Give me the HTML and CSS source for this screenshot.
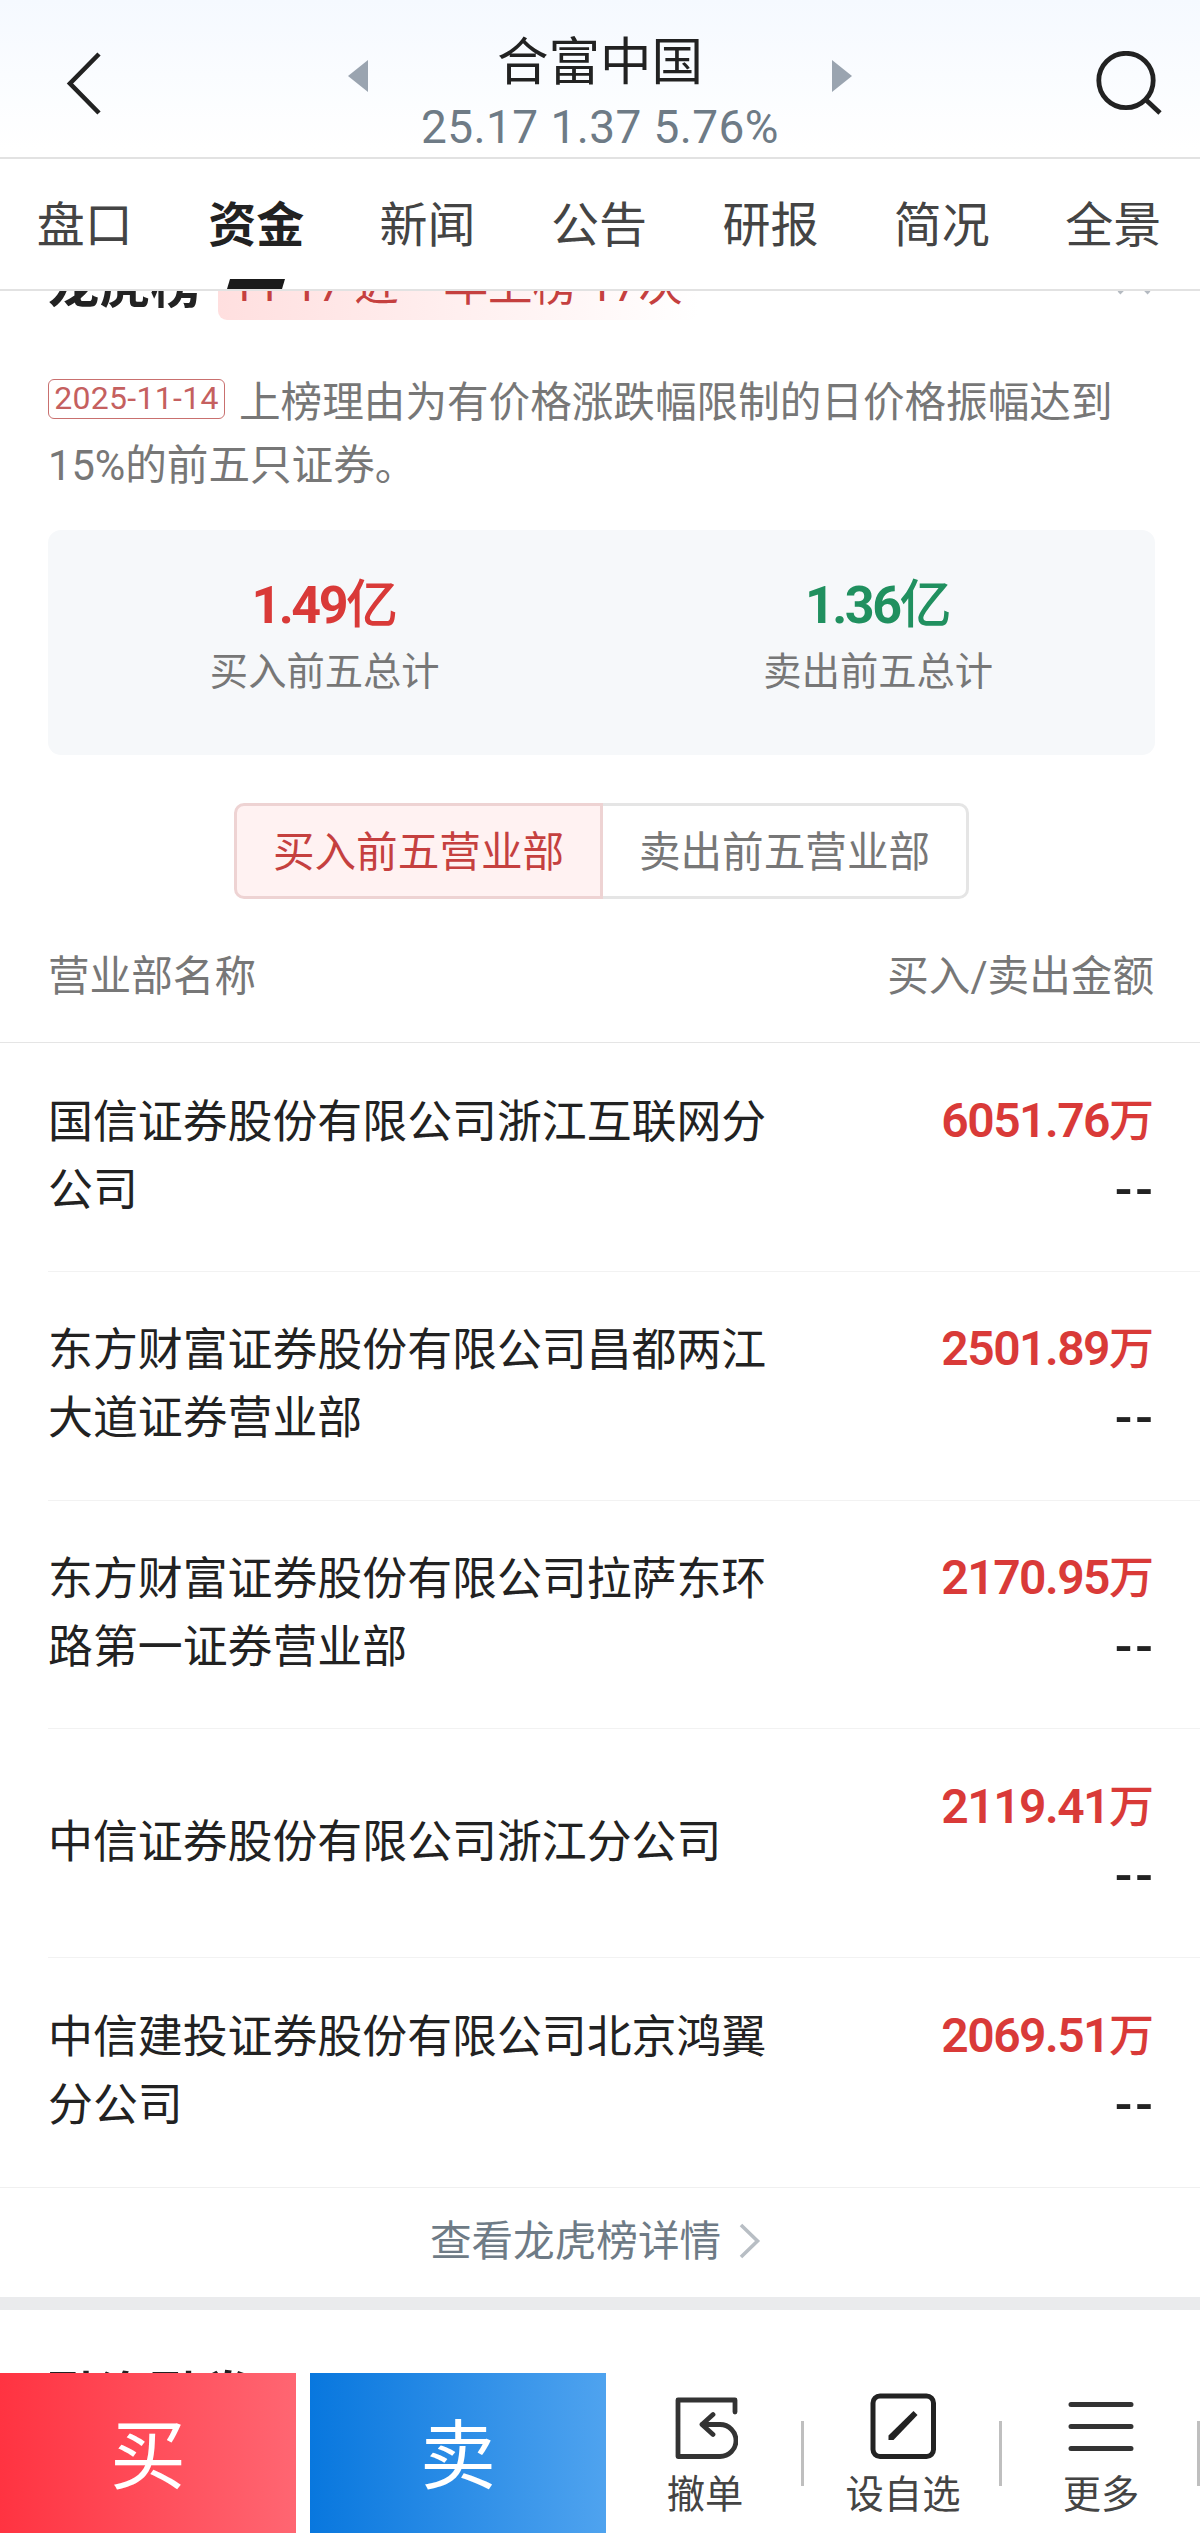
FILE: index.html
```html
<!DOCTYPE html>
<html lang="zh-CN">
<head>
<meta charset="utf-8">
<title>合富中国</title>
<link rel="stylesheet" href="styles.css">
</head>
<body>
<div class="app">
  <header class="topbar">
    <svg class="back" width="36" height="72" viewBox="0 0 36 72" fill="none" stroke="#222" stroke-width="4.6"><path d="M33 2 4 31.500 33 61"/></svg>
    <div class="stock">
      <svg class="arrow" width="20" height="32" viewBox="0 0 20 32"><path d="M20 0v32L0 16z" fill="#9aa4b0"/></svg>
      <div class="stock-text">
        <h1 class="stock-name">合富中国</h1>
        <p class="stock-quote">25.17 1.37 5.76%</p>
      </div>
      <svg class="arrow" width="20" height="32" viewBox="0 0 20 32"><path d="M0 0v32l20-16z" fill="#9aa4b0"/></svg>
    </div>
    <svg class="search" width="68" height="66" viewBox="0 0 68 66" fill="none" stroke="#222" stroke-width="4.800"><circle cx="30" cy="29.500" r="27.200"/><path d="M49 48 64 62"/></svg>
  </header>

  <nav class="tabs">
    <a class="tab">盘口</a>
    <a class="tab tab-active">资金<svg class="tab-mark" width="58" height="10" viewBox="0 0 58 10"><path d="M3 0h55l-3 10H0z" fill="#1a1a1a"/></svg></a>
    <a class="tab">新闻</a>
    <a class="tab">公告</a>
    <a class="tab">研报</a>
    <a class="tab">简况</a>
    <a class="tab">全景</a>
  </nav>

  <main class="content">
    <section class="board">
      <div class="board-head">
        <h2 class="section-title">龙虎榜</h2>
        <span class="board-badge">11-17 近一年上榜 17次</span>
        <svg class="collapse" width="34" height="20" viewBox="0 0 34 20" fill="none" stroke="#b4bac1" stroke-width="4"><path d="M2 18 17 3l15 15"/></svg>
      </div>
      <p class="reason"><span class="date-tag">2025-11-14</span>上榜理由为有价格涨跌幅限制的日价格振幅达到15%的前五只证券。</p>

      <div class="totals">
        <div class="total">
          <strong class="total-value up">1.49<span class="unit">亿</span></strong>
          <span class="total-label">买入前五总计</span>
        </div>
        <div class="total">
          <strong class="total-value down">1.36<span class="unit">亿</span></strong>
          <span class="total-label">卖出前五总计</span>
        </div>
      </div>

      <div class="segment">
        <span class="segment-item segment-on">买入前五营业部</span>
        <span class="segment-item">卖出前五营业部</span>
      </div>

      <div class="list-head"><span>营业部名称</span><span>买入/卖出金额</span></div>
      <ul class="list">
        <li class="row"><span class="name">国信证券股份有限公司浙江互联网分公司</span><span class="amounts"><b class="amount">6051.76<span class="unit">万</span></b><b class="none">--</b></span></li>
        <li class="row"><span class="name">东方财富证券股份有限公司昌都两江大道证券营业部</span><span class="amounts"><b class="amount">2501.89<span class="unit">万</span></b><b class="none">--</b></span></li>
        <li class="row"><span class="name">东方财富证券股份有限公司拉萨东环路第一证券营业部</span><span class="amounts"><b class="amount">2170.95<span class="unit">万</span></b><b class="none">--</b></span></li>
        <li class="row"><span class="name">中信证券股份有限公司浙江分公司</span><span class="amounts"><b class="amount">2119.41<span class="unit">万</span></b><b class="none">--</b></span></li>
        <li class="row"><span class="name">中信建投证券股份有限公司北京鸿翼分公司</span><span class="amounts"><b class="amount">2069.51<span class="unit">万</span></b><b class="none">--</b></span></li>
      </ul>
      <a class="detail">查看龙虎榜详情<svg class="detail-arrow" width="22" height="36" viewBox="0 0 22 36" fill="none" stroke="#b8bec4" stroke-width="3.600"><path d="M2 2l16.500 16L2 34"/></svg></a>
    </section>
    <section class="next">
      <h2 class="section-title">融资融券</h2>
    </section>
  </main>

  <footer class="toolbar">
    <a class="trade trade-buy">买</a>
    <a class="trade trade-sell">卖</a>
    <a class="tool">
      <svg width="66" height="66" viewBox="0 0 66 66" fill="none" stroke="#333" stroke-width="4.800" stroke-linecap="round" stroke-linejoin="round"><path d="M63 19V7H6V63.500H48A16 16 0 0 0 48 31.500H30M41 21.500 30 31.500l11 10"/></svg>
      <span>撤单</span>
    </a>
    <a class="tool">
      <svg width="66" height="66" viewBox="0 0 66 66" fill="none" stroke="#222" stroke-width="5"><rect x="3" y="3" width="60.500" height="60.500" rx="7"/><path d="M43.500 18 47.500 22 23.500 47H18.500V42.500z" fill="#222" stroke="none"/></svg>
      <span>设自选</span>
    </a>
    <a class="tool">
      <svg width="66" height="66" viewBox="0 0 66 66" fill="none" stroke="#333" stroke-width="5" stroke-linecap="round"><path d="M3 11.500h60M3 33.500h60M3 55.500h60"/></svg>
      <span>更多</span>
    </a>
  </footer>
</div>
</body>
</html>
```
FILE: styles.css
```css
* { box-sizing: border-box; }
body {
  margin: 0;
  background: #fff;
  color: #222;
  font-family: Roboto, "Noto Sans CJK SC", sans-serif;
}
h1, h2, p, ul { margin: 0; padding: 0; }
svg { display: block; flex: none; }
.app {
  display: flex;
  flex-direction: column;
  width: 1200px;
  height: 2533px;
  overflow: hidden;
}

/* Top bar */
.topbar {
  display: flex;
  justify-content: space-between;
  height: 159px;
  padding: 0 36px 0 66px;
  border-bottom: 2px solid #e2e2e2;
  background: linear-gradient(#f5f9ff, #fff 95%);
}
.back { margin-top: 52px; }
.search { margin-top: 51px; }
.stock {
  display: flex;
  justify-content: space-between;
  width: 504px;
  margin-left: 2px;
}
.arrow { margin-top: 60px; }
.stock-text { text-align: center; white-space: nowrap; }
.stock-name {
  margin-top: 30px;
  font-size: 51.500px;
  font-weight: 400;
  line-height: 65px;
}
.stock-quote {
  color: #6e7b86;
  font-size: 46px;
  letter-spacing: 0.400px;
  line-height: 64px;
}

/* Tabs */
.tabs {
  display: flex;
  height: 132px;
  border-bottom: 2px solid #e2e2e2;
}
.tab {
  display: flex;
  flex: 1;
  flex-direction: column;
  align-items: center;
  justify-content: space-between;
  padding: 37px 2px 0 0;
  color: #444;
  font-size: 48px;
  line-height: 60px;
}
.tab-active { color: #222; font-weight: 700; }

/* Scrolled content */
.content { height: 2082px; overflow: hidden; }
.section-title {
  font-size: 51.200px;
  font-weight: 700;
  line-height: 72px;
}
.board-head {
  display: flex;
  height: 70px;
  margin-top: -41px;
  padding: 0 49px 0 48px;
}
.board-badge {
  width: 480px;
  height: 70px;
  margin-left: 16px;
  padding-left: 13px;
  border-radius: 9px;
  background: linear-gradient(90deg, #ffdfdf, #fff);
  color: #c5403f;
  font-size: 44.600px;
  line-height: 72px;
  white-space: nowrap;
}
.collapse { margin: 25px 0 0 auto; }
.reason {
  margin-top: 52px;
  padding: 0 48px;
  color: #777;
  font-size: 41.600px;
  line-height: 62.700px;
}
.date-tag {
  display: inline-block;
  width: 177px;
  height: 40px;
  margin-right: 14px;
  border: 1.500px solid #c9706f;
  border-radius: 6px;
  color: #c5605f;
  font-size: 32px;
  letter-spacing: 0.300px;
  line-height: 37px;
  text-align: center;
  vertical-align: 8px;
}
.totals {
  display: flex;
  height: 225px;
  margin: 33px 45px 0 48px;
  padding-top: 41px;
  border-radius: 13px;
  background: #f6f8fa;
}
.total {
  display: flex;
  flex: 1;
  flex-direction: column;
  align-items: center;
}
.total-value {
  font-size: 52px;
  font-weight: 700;
  letter-spacing: -2.500px;
  line-height: 70px;
}
.unit { font-weight: 500; letter-spacing: 0; }
.up { color: #d93a38; }
.down { color: #20905f; }
.total-label {
  color: #777;
  font-size: 38.300px;
  line-height: 61px;
}
.segment {
  display: flex;
  width: 735px;
  height: 96px;
  margin: 48px 0 0 234px;
}
.segment-item {
  flex: 1;
  border: 3px solid #e5e5e5;
  border-left: 0;
  border-radius: 0 10px 10px 0;
  color: #777;
  font-size: 41.600px;
  line-height: 93px;
  text-align: center;
}
.segment-on {
  border: 3px solid #eed3d3;
  border-radius: 10px 0 0 10px;
  background: #fff2f2;
  color: #c5403f;
}
.list-head {
  display: flex;
  justify-content: space-between;
  height: 144px;
  padding: 46px 46px 0 48px;
  border-bottom: 1.500px solid #e5e5e5;
  color: #777;
  font-size: 41.600px;
  line-height: 63px;
}
.list { list-style: none; border-bottom: 1.500px solid #f0f0f0; }
.row {
  display: flex;
  align-items: center;
  justify-content: space-between;
  height: 228.700px;
  margin-left: 48px;
  padding: 0 46px 1px 0;
  border-bottom: 1.500px solid #f2f2f2;
}
.row:last-child { border-bottom: 0; }
.name {
  width: 722px;
  font-size: 44.900px;
  line-height: 68px;
}
.amounts {
  display: flex;
  flex-direction: column;
  align-items: flex-end;
  padding-bottom: 3px;
  line-height: 68px;
}
.amount {
  color: #d93a38;
  font-size: 48px;
  font-weight: 600;
  letter-spacing: -1.500px;
}
.amount .unit { font-size: 45px; }
.none { font-size: 52px; font-weight: 500; letter-spacing: 3px; margin-right: -2px; }
.detail {
  display: flex;
  align-items: center;
  justify-content: center;
  gap: 18px;
  height: 109px;
  padding: 0 9px 9px 0;
  color: #6e7b86;
  font-size: 41.600px;
}
.detail-arrow { margin-top: 6px; }
.next {
  padding: 51px 48px 0;
  border-top: 13px solid #eaebed;
}

/* Bottom toolbar */
.toolbar { display: flex; height: 160px; }
.trade {
  width: 296px;
  margin-right: 14px;
  color: #fff;
  font-size: 76px;
  line-height: 168px;
  text-align: center;
}
.trade-buy { background: linear-gradient(90deg, #ff3341, #ff6672); }
.trade-sell {
  margin-right: 0;
  background: linear-gradient(90deg, #0877de, #4fa3ef);
}
.tool {
  display: flex;
  flex: 1;
  flex-direction: column;
  align-items: center;
  padding-top: 20px;
  background: linear-gradient(#bfbfbf, #bfbfbf) right 48px / 3px 65px no-repeat;
  color: #444;
  font-size: 38.300px;
  line-height: 54px;
}
.tool span { margin-top: 9px; }
```
